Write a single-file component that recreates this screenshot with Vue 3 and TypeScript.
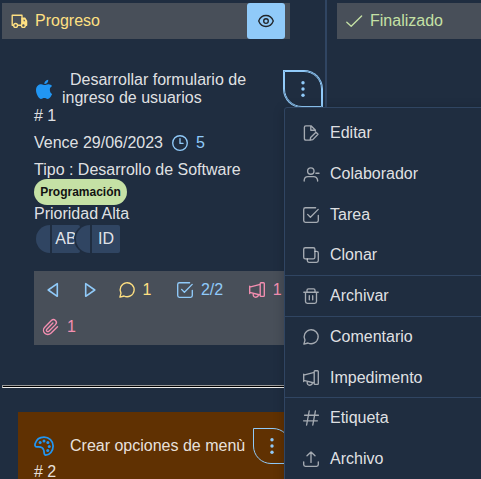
<script setup lang="ts">
import { defineComponent, h } from 'vue'

// Line icons on a 16 x 16 grid.
const shapes: Record<string, string> = {
  truck: '<path d="M2.2 12.2H1.2V2.2H11V12.2H6.6"/><path d="M11 5.2H13.8L15.6 8V12.2H11Z" fill="currentColor"/><path d="M12.6 6.6H13.2L14.2 8.2H12.6Z" fill="#484f59" stroke="none"/><circle cx="4.6" cy="12.4" r="1.9" fill="#484f59"/><circle cx="12.4" cy="12.4" r="1.9" fill="#484f59"/>',
  check: '<path d="M.8 9.2 5.2 13.2 15.6 3"/>',
  eye: '<path d="M.7 8C2 4.7 4.7 2.5 8 2.5S14 4.7 15.3 8C14 11.3 11.3 13.5 8 13.5S2 11.3.7 8Z"/><circle cx="8" cy="8" r="2.3"/>',
  dots: '<g fill="currentColor" stroke="none"><circle cx="8" cy="1.7" r="1.7"/><circle cx="8" cy="8" r="1.7"/><circle cx="8" cy="14.3" r="1.7"/></g>',
  clock: '<circle cx="8" cy="8" r="7.3"/><path d="M8 3.6V8.4H11"/>',
  prev: '<path stroke-width="1.6" d="M12.3 1.7V14.3L3.2 8Z"/>',
  next: '<path stroke-width="1.6" d="M3.7 1.7V14.3L12.8 8Z"/>',
  comment: '<path d="M.9 15.1 2 11.1A7 7 0 1 1 5 14Z"/>',
  task: '<path d="M15.3 8.3V13.6Q15.3 15.3 13.6 15.3H2.4Q.7 15.3.7 13.6V2.4Q.7.7 2.4.7H12.6M4.6 7.4 7.4 10.3 15.2 2.4"/>',
  horn: '<path d="M.7 4.2V11.6M.7 5.2 11.2 2.4V13L.7 10.4M11.2 1.6Q11.2.7 12 .7H14.5Q15.3.7 15.3 1.6V13.5Q15.3 14.4 14.5 14.4H12Q11.2 14.4 11.2 13.5ZM4.2 11.5C4 14.2 5 15.2 6.8 15.2S9.3 14.3 9.4 12.8"/>',
  clip: '<path transform="translate(-.9 -.3) scale(.72)" stroke-width="1.9" d="M21.400 11.050l-9.190 9.190a6 6 0 0 1-8.490-8.490l9.190-9.190a4 4 0 0 1 5.660 5.660l-9.200 9.190a2 2 0 0 1-2.830-2.830l8.490-8.480"/>',
  edit: '<path d="M6.4 15.1H2.8Q1.4 15.1 1.4 13.6V2.2Q1.4.8 2.8.8H8L12.3 5V6.1M7.8.8V5.2H12.3M7.2 15.2 7.6 12.6 13 7.2 15 9.2 9.8 14.6Z"/>',
  user: '<circle cx="7.8" cy="5" r="3.2"/><path d="M1.2 15V14.2Q1.4 10.6 5 10.6H10.6Q14 10.6 14.6 14.2V15M12.9 7.2H16"/>',
  clone: '<rect x=".7" y=".7" width="11.2" height="11.2" rx="1.6"/><path d="M12 4.3H13.6Q15.3 4.3 15.3 6V13.6Q15.3 15.3 13.6 15.3H6Q4.3 15.3 4.3 13.6V12"/>',
  trash: '<path d="M.8 4.2H15.2M2.5 4.2V13.5Q2.5 15.3 4.3 15.3H11.7Q13.5 15.3 13.5 13.5V4.2M4 4V2.2Q4 .8 5.4.8H10.6Q12 .8 12 2.2V4M6.3 7.7V11.7M9.7 7.7V11.7"/>',
  hash: '<path d="M6.2 1 3.6 15M12.4 1 9.8 15M1.6 5.2H15.4M.6 10.8H14.4"/>',
  upload: '<path d="M8 11.4V.9M4 4.8 8 .9 12 4.8M.7 10.8V13.6Q.7 15.3 2.4 15.3H13.6Q15.3 15.3 15.3 13.6V10.8"/>',
  apple: '<path fill="currentColor" stroke="none" d="M13.200 8.500c0-1.500.8-2.400 2-3.100-.8-1.100-1.900-1.600-3.200-1.700-1.400-.1-2.800.8-3.400.8-.7 0-1.800-.8-3-.8C3.300 3.700.9 5.300.9 9c0 1.100.2 2.200.6 3.300.6 1.600 2.100 4.500 3.800 4.500 1 0 1.700-.7 3-.7s1.900.7 3 .7c1.900 0 3.400-3 3.900-4.300-1.400-.7-2-2-2-4ZM10.800 2.600c1.100-1.300 1-2.400.9-2.900-2 .2-3.500 1.900-3.400 3.800 1 .1 1.800-.3 2.500-.9Z"/>',
  palette: '<path stroke-width="1.400" d="M8 .8A7.300 7.300 0 0 1 15.300 8C15.300 12 12.500 15.300 9.400 15.300 7.500 15.300 8.500 13 7.700 11 6.900 8.800 5 8.400 2.800 8.700.9 8.900.5 7.700.9 6.200 1.800 3 4.600.8 8 .8Z"/><g fill="currentColor" stroke="none"><circle cx="4.900" cy="5.200" r="1.200"/><circle cx="8" cy="3.900" r="1.200"/><circle cx="11.100" cy="5.200" r="1.200"/><circle cx="12.200" cy="8.400" r="1.200"/><circle cx="11" cy="11.600" r="1.200"/></g>',
}

const Icon = defineComponent({
  props: { name: { type: String, required: true } },
  setup: (props) => () =>
    h('svg', {
      viewBox: '0 0 16 16',
      fill: 'none',
      stroke: 'currentColor',
      'stroke-width': 1.35,
      'stroke-linejoin': 'round',
      'stroke-linecap': 'round',
      overflow: 'visible',
      'aria-hidden': 'true',
      innerHTML: shapes[props.name],
    }),
})

interface MenuItem {
  icon: string
  label: string
}

const menu: MenuItem[][] = [
  [
    { icon: 'edit', label: 'Editar' },
    { icon: 'user', label: 'Colaborador' },
    { icon: 'task', label: 'Tarea' },
    { icon: 'clone', label: 'Clonar' },
  ],
  [{ icon: 'trash', label: 'Archivar' }],
  [
    { icon: 'comment', label: 'Comentario' },
    { icon: 'horn', label: 'Impedimento' },
  ],
  [
    { icon: 'hash', label: 'Etiqueta' },
    { icon: 'upload', label: 'Archivo' },
  ],
]

const members: string[] = ['AB', 'ID']
</script>

<template>
  <main class="board">
    <section class="column progress">
      <header class="column-head yellow">
        <Icon name="truck" class="icon" />
        <span>Progreso</span>
        <button class="eye"><Icon name="eye" class="icon" /></button>
      </header>

      <article class="card">
        <div class="card-top">
          <Icon name="apple" class="icon brand" />
          <h2 class="title two">Desarrollar formulario de<br />ingreso de usuarios</h2>
          <button class="more focused"><Icon name="dots" class="icon" /></button>
        </div>
        <div class="number"># 1</div>
        <div class="due">
          <span>Vence 29/06/2023</span>
          <Icon name="clock" class="icon clock blue" />
          <span class="blue">5</span>
        </div>
        <div class="kind">Tipo : Desarrollo de Software</div>
        <span class="tag">Programación</span>
        <div class="priority">Prioridad Alta</div>
        <div class="members">
          <div v-for="m in members" :key="m" class="member">
            <span class="cap"></span><span class="initials">{{ m }}</span>
          </div>
        </div>
        <footer class="actions">
          <div class="line">
            <Icon name="prev" class="icon blue" />
            <Icon name="next" class="icon blue second" />
            <span class="count yellow third"><Icon name="comment" class="icon" />1</span>
            <span class="count blue fourth"><Icon name="task" class="icon" />2/2</span>
            <span class="count pink fifth"><Icon name="horn" class="icon" />1</span>
          </div>
          <div class="line">
            <span class="count pink"><Icon name="clip" class="icon" />1</span>
          </div>
        </footer>
      </article>

      <hr class="rule" />

      <article class="card brown">
        <div class="card-top">
          <Icon name="palette" class="icon art" />
          <h2 class="title">Crear opciones de menù</h2>
          <button class="more"><Icon name="dots" class="icon" /></button>
        </div>
        <div class="number"># 2</div>
      </article>
    </section>

    <section class="column done">
      <header class="column-head green">
        <Icon name="check" class="icon" />
        <span>Finalizado</span>
      </header>
    </section>

    <nav class="menu">
      <ul v-for="(group, i) in menu" :key="i" class="group">
        <li v-for="item in group" :key="item.label" class="item">
          <Icon :name="item.icon" class="icon" />
          <span>{{ item.label }}</span>
        </li>
      </ul>
    </nav>
  </main>
</template>

<style>
body {
  background: #1f2d40;
}
</style>

<style scoped>
.board {
  position: relative;
  display: grid;
  grid-template-columns: 327px 1fr;
  height: 479px;
  overflow: hidden;
  background: #1f2d40;
  color: rgba(255, 255, 255, 0.87);
  font: 16px/18px 'Liberation Sans', Arial, sans-serif;
}
.board * {
  box-sizing: border-box;
}
.icon {
  display: block;
  flex: none;
  width: 16px;
  height: 16px;
}
.blue { color: #90caf9; }
.yellow { color: #ffe082; }
.green { color: #c5e1a5; }
.pink { color: #f48fb1; }
.column {
  padding-top: 3px;
  min-width: 0;
}
.progress {
  border-right: 2px solid #304562;
  padding-left: 2px;
}
.done {
  padding-left: 10px;
}
.column-head {
  display: flex;
  align-items: center;
  height: 36px;
  padding-left: 9px;
  gap: 8px;
  background: #484f59;
}
.progress .column-head {
  width: 288px;
}
.eye {
  display: grid;
  place-items: center;
  width: 38px;
  height: 36px;
  margin: 0 5px 0 auto;
  padding: 0;
  border: 0;
  border-radius: 3px;
  background: #90caf9;
  color: #212529;
}
.card {
  padding: 31px 0 0 32px;
}
.card-top {
  display: flex;
}
.brand {
  width: 18px;
  height: 18px;
  margin: 10px 0 0 1px;
  color: #2196f3;
}
.title {
  margin: 0;
  font: inherit;
}
.two {
  width: 190px;
  margin: 1px 0 0 9px;
  text-indent: 8px;
}
.more {
  display: grid;
  place-items: center;
  width: 38px;
  height: 36px;
  padding: 0;
  border: 1px solid #90caf9;
  border-radius: 0 18px;
  background: transparent;
  color: #90caf9;
}
.focused {
  margin: 1px 0 0 32px;
  box-shadow: 0 0 0 1px #93cbf9;
}
.number {
  height: 18px;
}
.due {
  display: flex;
  align-items: center;
  gap: 8px;
  height: 36px;
}
.clock {
  margin-left: 1px;
}
.kind {
  height: 18px;
}
.tag {
  display: block;
  width: 93px;
  height: 26px;
  border-radius: 13px;
  background: #c5e1a5;
  color: #121212;
  font-size: 12px;
  font-weight: 700;
  line-height: 26px;
  text-align: center;
}
.members {
  display: flex;
  padding: 2px 0 0 2px;
}
.member {
  display: flex;
  gap: 2px;
  width: 44px;
}
.member + .member {
  margin-left: -4px;
}
.member + .member .cap {
  box-shadow: -1px 0 0 1px #1f2d40;
}
.cap {
  width: 14px;
  height: 28px;
  border-radius: 14px 0 0 14px;
  background: #304562;
}
.initials {
  width: 28px;
  height: 28px;
  border-radius: 0 2px 2px 0;
  background: #304562;
  line-height: 28px;
  text-align: center;
}
.actions {
  width: 254px;
  height: 74px;
  margin-top: 18px;
  background: #484f59;
}
.line {
  display: flex;
  align-items: center;
  height: 37px;
  padding-left: 11px;
}
.line + .line {
  padding-left: 9px;
}
.count {
  display: flex;
  align-items: center;
  gap: 8px;
}
.third,
.fifth {
  gap: 7.5px;
}
.second { margin-left: 21px; }
.third { margin-left: 21px; }
.fourth { margin-left: 25.5px; }
.fifth { margin-left: 26px; }
.rule {
  height: 3px;
  margin: 40px 0 24px;
  border: 1px solid;
  border-color: #9a9a9a #eee #eee #9a9a9a;
  background: #000;
}
.brown {
  width: 290px;
  height: 80px;
  margin-left: 16px;
  padding: 16px 0 0 16px;
  background: #603102;
}
.brown .number {
  margin-top: -1px;
}
.art {
  width: 20px;
  height: 20px;
  margin-top: 8px;
  color: #2196f3;
}
.brown .title {
  width: 183px;
  margin: 9px 0 0 16px;
  white-space: nowrap;
}
.menu {
  position: absolute;
  top: 107px;
  left: 284px;
  width: 220px;
  height: 390px;
  padding-top: 5.1px;
  border: 1px solid #304562;
  border-radius: 3px;
  background: #1f2d40;
  box-shadow: 0 2px 12px rgba(0, 0, 0, 0.2);
}
.group {
  margin: 0;
  padding: 0;
  list-style: none;
}
.group:first-child {
  height: 162.1px;
}
.group + .group {
  border-top: 1px solid #304562;
}
.item {
  display: flex;
  align-items: center;
  gap: 11px;
  height: 40px;
  padding-left: 18px;
}
.item + .item {
  padding-top: 0.8px;
}
.group:first-child .item {
  height: 40.6px;
  padding-top: 0;
}
.item .icon {
  color: rgba(255, 255, 255, 0.6);
}
</style>
